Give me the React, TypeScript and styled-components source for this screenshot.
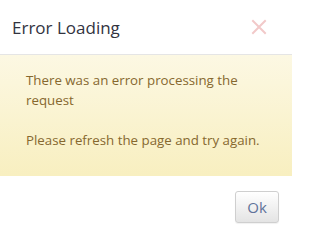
import React from 'react';
import styled, { createGlobalStyle } from 'styled-components';

const GlobalStyle = createGlobalStyle`
    html, body {
        margin: 0;
        padding: 0;
        background: #fff;
    }
    body {
        font-family: 'Open Sans', 'Liberation Sans', sans-serif;
    }
`;

const Modal = styled.div`
    width: 292px;
    height: 232px;
    display: flex;
    flex-direction: column;
    background: #fff;
    overflow: hidden;
`;

const Header = styled.div`
    display: flex;
    align-items: center;
    justify-content: space-between;
    height: 55px;
    box-sizing: border-box;
    padding: 0 25px 0 12px;
    border-bottom: 1px solid #e5e5e5;
`;

const Title = styled.h4`
    margin: 0;
    font-size: 17px;
    font-weight: 400;
    color: #32333f;
    line-height: 1;
`;

const CloseButton = styled.button`
    display: flex;
    align-items: center;
    justify-content: center;
    width: 16px;
    height: 16px;
    padding: 0;
    border: 0;
    background: transparent;
    cursor: pointer;
`;

const Alert = styled.div`
    height: 121px;
    box-sizing: border-box;
    padding: 15px 24px 0 26px;
    background: linear-gradient(to bottom, #fcf8e3 0%, #f8efc0 100%);
    color: #86682f;
    font-size: 13.3px;
    line-height: 20px;
`;

const Message = styled.p`
    margin: 0;
`;

const Footer = styled.div`
    display: flex;
    justify-content: flex-end;
    padding: 15px 13px 0 0;
`;

const OkButton = styled.button`
    width: 44px;
    height: 32px;
    box-sizing: border-box;
    border: 1px solid #cfcfcf;
    border-radius: 3px;
    background: linear-gradient(to bottom, #ffffff 0%, #e4e4e4 100%);
    box-shadow: 0 1px 1px rgba(0, 0, 0, 0.06);
    font-family: inherit;
    font-size: 15px;
    color: #5f739a;
    padding: 0;
    cursor: pointer;
`;

const CloseIcon = () => (
    <svg width="16" height="16" viewBox="0 0 16 16">
        <path d="M2 2 L14 14 M14 2 L2 14" stroke="#f2c9c9" strokeWidth="2" strokeLinecap="square" />
    </svg>
);

const App = () => (
    <>
        <GlobalStyle />
        <Modal>
            <Header>
                <Title>Error Loading</Title>
                <CloseButton aria-label="Close">
                    <CloseIcon />
                </CloseButton>
            </Header>
            <Alert>
                <Message>There was an error processing the request</Message>
                <Message>&nbsp;</Message>
                <Message>Please refresh the page and try again.</Message>
            </Alert>
            <Footer>
                <OkButton>Ok</OkButton>
            </Footer>
        </Modal>
    </>
);

export default App;
